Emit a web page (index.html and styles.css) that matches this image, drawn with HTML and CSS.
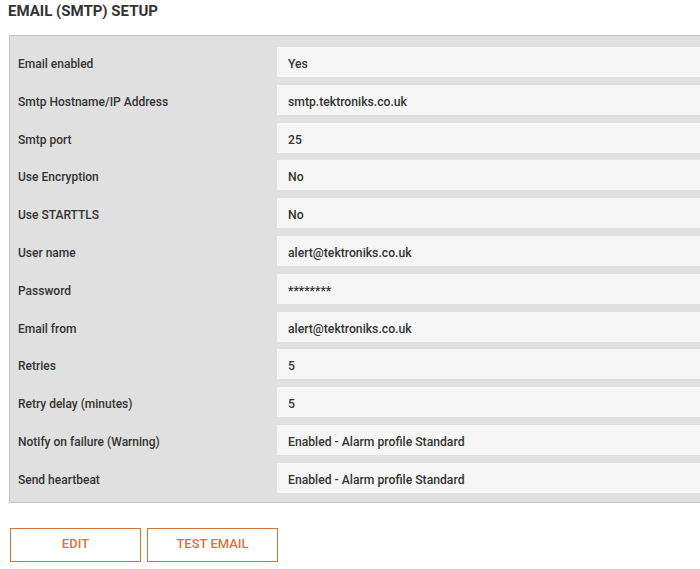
FILE: index.html
```html
<!DOCTYPE html>
<html>
<head>
<meta charset="utf-8">
<link rel="stylesheet" href="styles.css">
</head>
<body>
<div class="page">
  <h1 class="title">EMAIL (SMTP) SETUP</h1>
  <div class="panel">
    <div class="row"><div class="label">Email enabled</div><div class="value">Yes</div></div>
    <div class="row"><div class="label">Smtp Hostname/IP Address</div><div class="value">smtp.tektroniks.co.uk</div></div>
    <div class="row"><div class="label">Smtp port</div><div class="value">25</div></div>
    <div class="row"><div class="label">Use Encryption</div><div class="value">No</div></div>
    <div class="row"><div class="label">Use STARTTLS</div><div class="value">No</div></div>
    <div class="row"><div class="label">User name</div><div class="value">alert@tektroniks.co.uk</div></div>
    <div class="row"><div class="label">Password</div><div class="value">********</div></div>
    <div class="row"><div class="label">Email from</div><div class="value">alert@tektroniks.co.uk</div></div>
    <div class="row"><div class="label">Retries</div><div class="value">5</div></div>
    <div class="row"><div class="label">Retry delay (minutes)</div><div class="value">5</div></div>
    <div class="row"><div class="label">Notify on failure (Warning)</div><div class="value">Enabled - Alarm profile Standard</div></div>
    <div class="row"><div class="label">Send heartbeat</div><div class="value">Enabled - Alarm profile Standard</div></div>
  </div>
  <div class="actions">
    <button class="btn">EDIT</button>
    <button class="btn">TEST EMAIL</button>
  </div>
</div>
</body>
</html>
```
FILE: styles.css
```css
html, body {
  margin: 0;
  padding: 0;
  overflow: hidden;
  background: #ffffff;
}
body {
  font-family: Roboto, "Liberation Sans", Arial, sans-serif;
  color: #333333;
}
.page {
  width: 720px;
  padding: 3px 0 0 8px;
}
.title {
  margin: 0;
  font-size: 15px;
  font-weight: 700;
  line-height: 17px;
  color: #333333;
}
.panel {
  margin: 15px 0 0 1px;
  background: #e0e0e0;
  border: 1px solid #c4c4c4;
  padding: 11px 0 9px 0;
  display: flex;
  flex-direction: column;
  gap: 7.8px;
}
.row {
  display: flex;
  height: 30px;
  align-items: stretch;
}
.label {
  width: 259px;
  padding-left: 8px;
  padding-top: 4px;
  box-sizing: content-box;
  font-size: 12px;
  font-weight: 500;
  display: flex;
  align-items: center;
  color: #333333;
}
.value {
  flex: 1;
  background: #f6f6f6;
  padding-left: 11px;
  padding-top: 4px;
  font-size: 12.2px;
  font-weight: 500;
  display: flex;
  align-items: center;
  color: #333333;
}
.actions {
  display: flex;
  gap: 6px;
  margin: 25px 0 0 2px;
}
.btn {
  width: 131px;
  height: 34px;
  background: #ffffff;
  border: 1.5px solid #c8783a;
  border-radius: 0;
  color: #e0703a;
  font-family: Roboto, "Liberation Sans", Arial, sans-serif;
  font-size: 13px;
  font-weight: 500;
  padding: 0 0 2px 0;
  margin: 0;
}
```
